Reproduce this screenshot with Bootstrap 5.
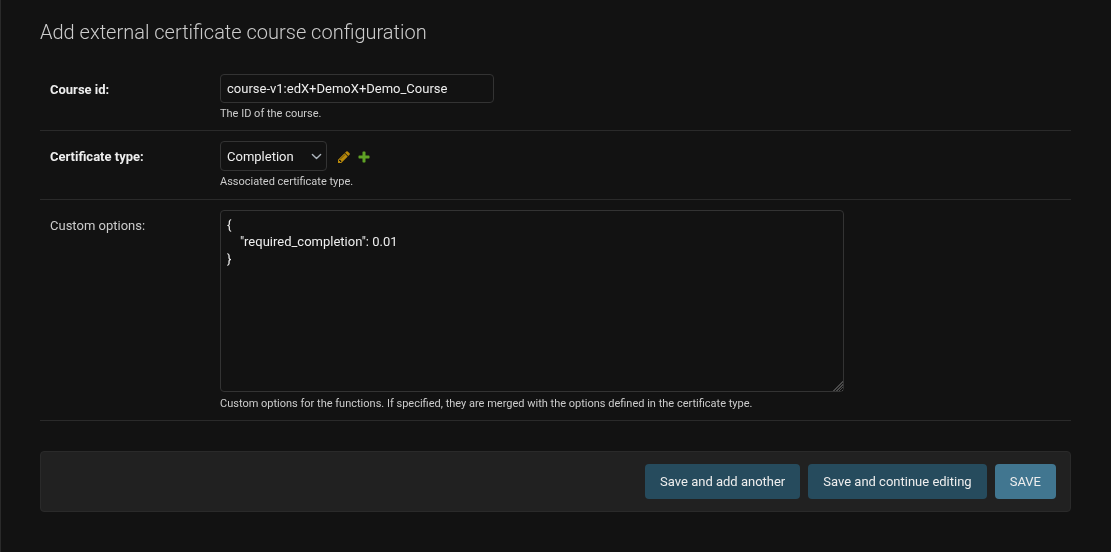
<!DOCTYPE html>
<html lang="en" data-bs-theme="dark">
<head>
    <meta charset="UTF-8">
    <meta name="viewport" content="width=device-width, initial-scale=1.0">
    <title>Add external certificate course configuration</title>
    <link href="https://cdn.jsdelivr.net/npm/bootstrap@5.3.3/dist/css/bootstrap.min.css" rel="stylesheet">
    <style>
        html, body {
            height: 100%;
        }
        body {
            background-color: #121212;
            color: #eeeeee;
            font-family: Roboto, "Liberation Sans", sans-serif;
            font-size: 13px;
            line-height: 16px;
            border-left: 1px solid #2a2a2a;
            overflow: hidden;
        }
        .page-wrap {
            padding: 20px 40px 0 39px;
            will-change: transform;
        }
        .page-title {
            font-family: Roboto, "Liberation Sans", sans-serif;
            font-size: 20px;
            font-weight: 300;
            line-height: 24px;
            color: #cccccc;
            margin: 0 0 30px;
        }
        .form-line {
            display: flex;
            padding: 0 10px;
            border-bottom: 1px solid #2a2a2a;
        }
        .line-first {
            height: 57px;
        }
        .line-second {
            height: 69px;
            padding-top: 10px;
        }
        .line-third {
            height: 221px;
            padding-top: 10px;
        }
        .field-label {
            width: 170px;
            flex-shrink: 0;
            color: #cccccc;
            margin: 0;
            padding-top: 8px;
        }
        .field-label.required-label {
            font-weight: 700;
            color: #eeeeee;
        }
        .field-input,
        .field-select,
        .field-area {
            background-color: #121212;
            color: #eeeeee;
            border: 1px solid #333333;
            border-radius: 4px;
            font-family: Roboto, "Liberation Sans", sans-serif;
            font-size: 13px;
            line-height: 16px;
            box-shadow: none;
        }
        .field-input {
            display: block;
            width: 274px;
            height: 29px;
            padding: 5px 6px;
        }
        .field-select {
            width: 107px;
            height: 30px;
            padding: 6px 6px 4px;
            background-position: right 4px center;
            background-size: 11px 11px;
        }
        .field-area {
            display: block;
            width: 624px;
            height: 182px;
            padding: 5px 6px;
            line-height: 17px;
            overflow: hidden;
            resize: both;
        }
        .field-area::-webkit-resizer {
            background:
                linear-gradient(135deg, #121212 62%, transparent 62%),
                repeating-linear-gradient(135deg, #4a4a4a 0 1px, #121212 1px 2px);
        }
        .help-note {
            font-size: 11px;
            line-height: 14px;
            color: #cccccc;
            margin-top: 4px;
        }
        .line-third .help-note {
            margin-top: 5px;
        }
        .action-icon {
            width: 14px;
            height: 14px;
            display: block;
            margin-top: 2px;
        }
        .edit-link {
            margin-left: 10px;
        }
        .add-link {
            margin-left: 6px;
        }
        .submit-bar {
            background-color: #212121;
            border: 1px solid #2a2a2a;
            border-radius: 4px;
            height: 61px;
            margin-top: 30px;
            padding: 0 14px;
        }
        .save-btn {
            height: 35px;
            border: 0;
            border-radius: 4px;
            padding: 0 15px;
            font-size: 13px;
            line-height: 15px;
            color: #eeeeee;
            background-color: #264b5d;
            white-space: nowrap;
        }
        .save-btn.save-default {
            background-color: #417690;
        }
    </style>
</head>
<body>

    <div class="page-wrap">
        <h1 class="page-title">Add external certificate course configuration</h1>

        <form>
            <!-- Course id -->
            <div class="form-line line-first">
                <label class="field-label required-label" for="id_course_id">Course id:</label>
                <div>
                    <input class="form-control field-input" id="id_course_id" type="text" value="course-v1:edX+DemoX+Demo_Course">
                    <div class="help-note">The ID of the course.</div>
                </div>
            </div>

            <!-- Certificate type -->
            <div class="form-line line-second">
                <label class="field-label required-label" for="id_certificate_type">Certificate type:</label>
                <div>
                    <div class="d-flex align-items-center">
                        <select class="form-select field-select" id="id_certificate_type">
                            <option>Completion</option>
                        </select>
                        <a href="#" class="edit-link" title="Change">
                            <svg class="action-icon" viewBox="0 0 1792 1792">
                                <path fill="#b8890a" d="M491 1536l91-91-235-235-91 91v107h128v128h107zm523-928q0-22-22-22-10 0-17 7l-542 542q-7 7-7 17 0 22 22 22 10 0 17-7l542-542q7-7 7-17zm-54-192l416 416-832 832h-416v-416zm683 96q0 53-37 90l-166 166-416-416 166-165q36-38 90-38 53 0 91 38l235 234q37 39 37 91z"/>
                            </svg>
                        </a>
                        <a href="#" class="add-link" title="Add">
                            <svg class="action-icon" viewBox="0 0 1792 1792">
                                <path fill="#5fa225" d="M1600 796v192q0 40-28 68t-68 28h-416v416q0 40-28 68t-68 28h-192q-40 0-68-28t-28-68v-416h-416q-40 0-68-28t-28-68v-192q0-40 28-68t68-28h416v-416q0-40 28-68t68-28h192q40 0 68 28t28 68v416h416q40 0 68 28t28 68z"/>
                            </svg>
                        </a>
                    </div>
                    <div class="help-note">Associated certificate type.</div>
                </div>
            </div>

            <!-- Custom options -->
            <div class="form-line line-third">
                <label class="field-label" for="id_custom_options">Custom options:</label>
                <div>
                    <textarea class="form-control field-area" id="id_custom_options" spellcheck="false">{
    "required_completion": 0.01
}</textarea>
                    <div class="help-note">Custom options for the functions. If specified, they are merged with the options defined in the certificate type.</div>
                </div>
            </div>

            <div class="submit-bar d-flex justify-content-end align-items-center gap-2">
                <button type="button" class="btn save-btn">Save and add another</button>
                <button type="button" class="btn save-btn">Save and continue editing</button>
                <button type="button" class="btn save-btn save-default">SAVE</button>
            </div>
        </form>
    </div>

    <script src="https://cdn.jsdelivr.net/npm/bootstrap@5.3.3/dist/js/bootstrap.bundle.min.js"></script>
</body>
</html>
